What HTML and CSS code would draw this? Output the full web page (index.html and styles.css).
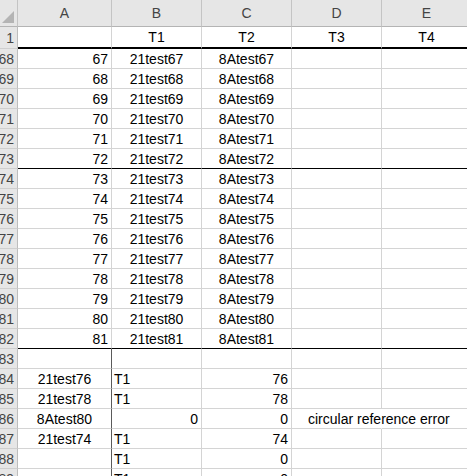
FILE: index.html
```html
<!DOCTYPE html>
<html>
<head>
<meta charset="utf-8">
<link rel="stylesheet" href="styles.css">
</head>
<body>
<div class="sheet">
  <div class="row hdr">
    <div class="c rh corner"><span class="tri"></span></div>
    <div class="c ca ctr">A</div>
    <div class="c cb ctr">B</div>
    <div class="c cc ctr">C</div>
    <div class="c cd ctr">D</div>
    <div class="c ce ctr">E</div>
  </div>
  <div class="row r1">
    <div class="c rh">1</div>
    <div class="c ca thick2"></div>
    <div class="c cb thick2 ctr">T1</div>
    <div class="c cc thick2 ctr">T2</div>
    <div class="c cd thick2 ctr">T3</div>
    <div class="c ce thick2 ctr">T4</div>
  </div>
  <div class="row"><div class="c rh">68</div><div class="c ca rt">67</div><div class="c cb ctr">21test67</div><div class="c cc ctr">8Atest67</div><div class="c cd"></div><div class="c ce"></div></div>
  <div class="row"><div class="c rh">69</div><div class="c ca rt">68</div><div class="c cb ctr">21test68</div><div class="c cc ctr">8Atest68</div><div class="c cd"></div><div class="c ce"></div></div>
  <div class="row"><div class="c rh">70</div><div class="c ca rt">69</div><div class="c cb ctr">21test69</div><div class="c cc ctr">8Atest69</div><div class="c cd"></div><div class="c ce"></div></div>
  <div class="row"><div class="c rh">71</div><div class="c ca rt">70</div><div class="c cb ctr">21test70</div><div class="c cc ctr">8Atest70</div><div class="c cd"></div><div class="c ce"></div></div>
  <div class="row"><div class="c rh">72</div><div class="c ca rt">71</div><div class="c cb ctr">21test71</div><div class="c cc ctr">8Atest71</div><div class="c cd"></div><div class="c ce"></div></div>
  <div class="row"><div class="c rh">73</div><div class="c ca rt thick">72</div><div class="c cb ctr thick">21test72</div><div class="c cc ctr thick">8Atest72</div><div class="c cd thick"></div><div class="c ce thick"></div></div>
  <div class="row"><div class="c rh">74</div><div class="c ca rt">73</div><div class="c cb ctr">21test73</div><div class="c cc ctr">8Atest73</div><div class="c cd"></div><div class="c ce"></div></div>
  <div class="row"><div class="c rh">75</div><div class="c ca rt">74</div><div class="c cb ctr">21test74</div><div class="c cc ctr">8Atest74</div><div class="c cd"></div><div class="c ce"></div></div>
  <div class="row"><div class="c rh">76</div><div class="c ca rt">75</div><div class="c cb ctr">21test75</div><div class="c cc ctr">8Atest75</div><div class="c cd"></div><div class="c ce"></div></div>
  <div class="row"><div class="c rh">77</div><div class="c ca rt">76</div><div class="c cb ctr">21test76</div><div class="c cc ctr">8Atest76</div><div class="c cd"></div><div class="c ce"></div></div>
  <div class="row"><div class="c rh">78</div><div class="c ca rt">77</div><div class="c cb ctr">21test77</div><div class="c cc ctr">8Atest77</div><div class="c cd"></div><div class="c ce"></div></div>
  <div class="row"><div class="c rh">79</div><div class="c ca rt">78</div><div class="c cb ctr">21test78</div><div class="c cc ctr">8Atest78</div><div class="c cd"></div><div class="c ce"></div></div>
  <div class="row"><div class="c rh">80</div><div class="c ca rt">79</div><div class="c cb ctr">21test79</div><div class="c cc ctr">8Atest79</div><div class="c cd"></div><div class="c ce"></div></div>
  <div class="row"><div class="c rh">81</div><div class="c ca rt">80</div><div class="c cb ctr">21test80</div><div class="c cc ctr">8Atest80</div><div class="c cd"></div><div class="c ce"></div></div>
  <div class="row"><div class="c rh">82</div><div class="c ca rt thick">81</div><div class="c cb ctr thick">21test81</div><div class="c cc ctr thick">8Atest81</div><div class="c cd thick"></div><div class="c ce thick"></div></div>
  <div class="row"><div class="c rh">83</div><div class="c ca dk"></div><div class="c cb"></div><div class="c cc"></div><div class="c cd"></div><div class="c ce"></div></div>
  <div class="row"><div class="c rh">84</div><div class="c ca dk ctr">21test76</div><div class="c cb lt">T1</div><div class="c cc rt">76</div><div class="c cd"></div><div class="c ce"></div></div>
  <div class="row"><div class="c rh">85</div><div class="c ca dk ctr">21test78</div><div class="c cb lt">T1</div><div class="c cc rt">78</div><div class="c cd"></div><div class="c ce"></div></div>
  <div class="row"><div class="c rh">86</div><div class="c ca dk ctr">8Atest80</div><div class="c cb rt">0</div><div class="c cc rt">0</div><div class="c cd over">circular reference error</div><div class="c ce"></div></div>
  <div class="row"><div class="c rh">87</div><div class="c ca dk ctr">21test74</div><div class="c cb lt">T1</div><div class="c cc rt">74</div><div class="c cd"></div><div class="c ce"></div></div>
  <div class="row"><div class="c rh">88</div><div class="c ca dk"></div><div class="c cb lt">T1</div><div class="c cc rt">0</div><div class="c cd"></div><div class="c ce"></div></div>
  <div class="row"><div class="c rh">89</div><div class="c ca dk"></div><div class="c cb lt">T1</div><div class="c cc rt">0</div><div class="c cd"></div><div class="c ce"></div></div>
</div>
</body>
</html>
```
FILE: styles.css
```css
html, body {
  margin: 0;
  padding: 0;
  background: #fff;
  overflow: hidden;
}
.sheet {
  font-family: "Liberation Sans", Arial, sans-serif;
  font-size: 14px;
  color: #000;
  width: 467px;
  height: 476px;
  overflow: hidden;
}
.row {
  display: flex;
  height: 20px;
}
.c {
  box-sizing: border-box;
  flex: none;
  height: 100%;
  display: flex;
  align-items: center;
  white-space: nowrap;
  border-right: 1px solid #d4d4d4;
  border-bottom: 1px solid #d4d4d4;
  overflow: hidden;
}
.rh {
  width: 18px;
  background: #e6e6e6;
  color: #444;
  border-right-color: #bdbdbd;
  border-bottom-color: #cfcfcf;
  justify-content: flex-end;
  padding-right: 3px;
}
.ca { width: 94px; }
.cb, .cc, .cd, .ce { width: 90px; }
.ctr { justify-content: center; }
.rt { justify-content: flex-end; padding-right: 3px; }
.lt { justify-content: flex-start; padding-left: 2px; }
.hdr { height: 27px; }
.hdr .c {
  background: #e6e6e6;
  color: #444;
  border-right-color: #c4c4c4;
  border-bottom-color: #b4b4b4;
}
.corner {
  position: relative;
}
.tri {
  position: absolute;
  right: 3px;
  bottom: 3px;
  width: 0;
  height: 0;
  border-left: 12px solid transparent;
  border-bottom: 12px solid #b4b4b4;
}
.r1 { height: 22px; }
.thick2 { border-bottom: 2px solid #000; }
.thick { border-bottom: 1px solid #000; }
.dk { border-right-color: #5a5a5a; }
.over {
  overflow: visible;
  border-right-color: transparent;
  padding-left: 16px;
  position: relative;
  z-index: 1;
}
```
